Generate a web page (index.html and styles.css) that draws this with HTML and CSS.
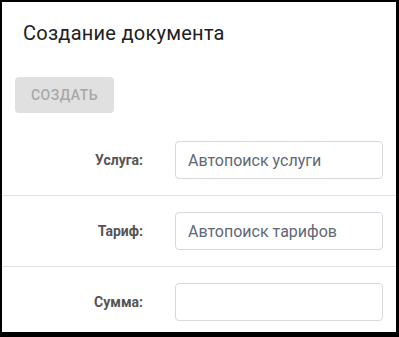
FILE: index.html
```html
<!DOCTYPE html>
<html lang="ru">
<head>
  <meta charset="UTF-8" />
  <meta name="viewport" content="width=device-width, initial-scale=1.0" />
  <title>Создание документа</title>
  <link rel="stylesheet" href="styles.css">
</head>
<body>
  <div class="dialog">
    <h1 class="dialog-title">Создание документа</h1>

    <div class="actions">
      <button class="create-button" disabled>Создать</button>
    </div>

    <div class="form">
      <div class="form-row">
        <label class="form-label" for="service">Услуга:</label>
        <input class="form-input" id="service" type="text" value="Автопоиск услуги">
      </div>
      <div class="form-row">
        <label class="form-label" for="tariff">Тариф:</label>
        <input class="form-input" id="tariff" type="text" value="Автопоиск тарифов">
      </div>
      <div class="form-row">
        <label class="form-label" for="sum">Сумма:</label>
        <input class="form-input" id="sum" type="text" value="">
      </div>
    </div>
  </div>
</body>
</html>
```

FILE: styles.css
```css
* {
  margin: 0;
  padding: 0;
  box-sizing: border-box;
}

html, body {
  height: 100%;
}

body {
  font-family: Roboto, "Noto Sans", sans-serif;
  background-color: #000;
  padding: 2px 3px 5px 2px;
  overflow: hidden;
}

.dialog {
  background: #fff;
  height: 100%;
  overflow: hidden;
}

.dialog-title {
  font-size: 20px;
  font-weight: 400;
  letter-spacing: 0.25px;
  color: #212121;
  padding: 19px 21px 0;
  line-height: 24px;
}

.actions {
  padding: 32px 13px 0;
}

.create-button {
  width: 99px;
  height: 36px;
  border: none;
  border-radius: 4px;
  background: #e0e0e0;
  color: #a8a8a8;
  font-family: inherit;
  font-size: 14px;
  font-weight: 500;
  letter-spacing: 0.5px;
  text-transform: uppercase;
}

.form {
  margin-top: 12px;
}

.form-row {
  display: flex;
  align-items: center;
  padding: 16px 0;
  border-bottom: 1px solid #e0e0e0;
}

.form-row:last-child {
  border-bottom: none;
}

.form-label {
  width: 141px;
  text-align: right;
  font-size: 14px;
  font-weight: 700;
  color: #555;
}

.form-input {
  margin-left: 32px;
  width: 208px;
  height: 38px;
  border: 1px solid #d6d9de;
  border-radius: 4px;
  padding: 0 12px;
  font-family: inherit;
  font-size: 16px;
  color: #616875;
  outline: none;
}
```
